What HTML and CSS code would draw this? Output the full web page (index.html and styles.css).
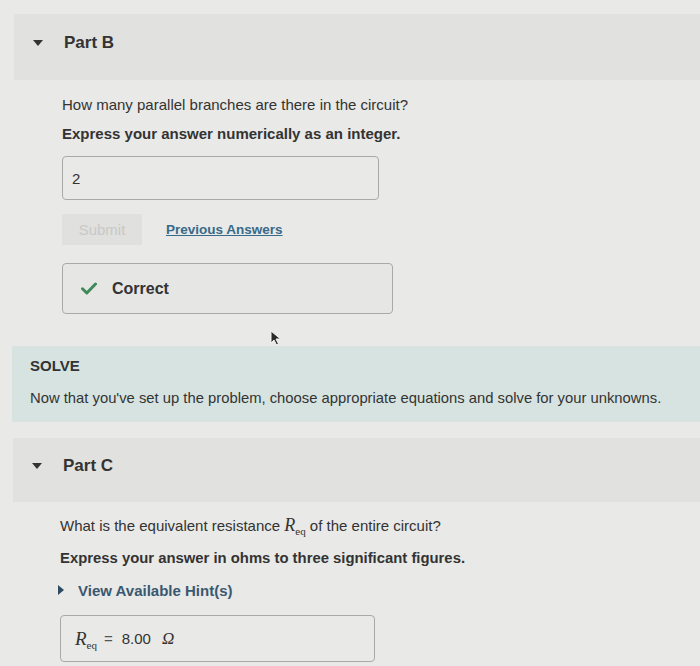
FILE: index.html
```html
<!DOCTYPE html>
<html>
<head>
<meta charset="utf-8">
<link rel="stylesheet" href="styles.css">
</head>
<body>
<div class="page">
  <div class="part-header hb">
    <span class="tri"></span>
    <span class="part-title">Part B</span>
  </div>
  <div class="part-body bb">
    <p class="q">How many parallel branches are there in the circuit?</p>
    <p class="instr">Express your answer numerically as an integer.</p>
    <div class="answer-box"><span class="ans">2</span></div>
    <div class="actions">
      <button class="submit">Submit</button>
      <a class="prev">Previous Answers</a>
    </div>
    <div class="correct-box">
      <svg class="check" width="16" height="13" viewBox="0 0 16 13"><path d="M1.5 6.8 L5.8 11 L14.5 2" fill="none" stroke="#3f8a5a" stroke-width="3" stroke-linecap="round" stroke-linejoin="round"/></svg>
      <span class="correct-text">Correct</span>
    </div>
  </div>
  <div class="cursor-row">
    <svg class="cursor" width="12" height="16" viewBox="0 0 12 16"><path d="M1 1 L1 13 L4 10 L6.5 15 L8.5 14 L6 9 L10.5 9 Z" fill="#2a2a2a" stroke="#f2f2f2" stroke-width="1"/></svg>
  </div>
  <div class="solve">
    <div class="solve-title">SOLVE</div>
    <div class="solve-text">Now that you've set up the problem, choose appropriate equations and solve for your unknowns.</div>
  </div>
  <div class="part-header hc">
    <span class="tri"></span>
    <span class="part-title">Part C</span>
  </div>
  <div class="part-body bc">
    <p class="q">What is the equivalent resistance <span class="math"><i>R</i><sub>eq</sub></span> of the entire circuit?</p>
    <p class="instr">Express your answer in ohms to three significant figures.</p>
    <div class="hint"><span class="hint-tri"></span><span class="hint-text">View Available Hint(s)</span></div>
    <div class="answer-box c">
      <span class="math big"><i>R</i><sub>eq</sub></span><span class="eq">=</span><span class="val">8.00</span><span class="omega">Ω</span>
    </div>
  </div>
</div>
</body>
</html>
```
FILE: styles.css
```css
html, body {
  margin: 0;
  padding: 0;
  background: #e9e9e7;
  font-family: "Liberation Sans", Arial, sans-serif;
  color: #333;
  overflow: hidden;
}
.page {
  padding-top: 14px;
  width: 700px;
}
.part-header {
  display: flex;
  align-items: center;
  background: #e1e1df;
  box-sizing: border-box;
  padding-bottom: 8px;
}
.hb {
  margin-left: 14px;
  padding-left: 19px;
  height: 66px;
}
.hc {
  margin-left: 13px;
  padding-left: 19px;
  height: 64px;
  margin-top: 16px;
}
.tri {
  width: 0;
  height: 0;
  border-left: 5.5px solid transparent;
  border-right: 5.5px solid transparent;
  border-top: 6px solid #333;
  margin-right: 21px;
}
.part-title {
  font-size: 17px;
  font-weight: bold;
  color: #333;
  line-height: 20px;
}
.part-body p {
  margin: 0;
  font-size: 15px;
  line-height: 20px;
}
.bb { padding-left: 62px; padding-top: 15px; }
.bc { padding-left: 60px; padding-top: 13px; }
.instr { font-weight: bold; }
.bb .instr { margin-top: 9px !important; }
.bc .instr { margin-top: 11px !important; font-size: 14.85px !important; }
.answer-box {
  box-sizing: border-box;
  width: 317px;
  height: 44px;
  border: 1px solid #a9a9a9;
  border-radius: 4px;
  margin-top: 12px;
  display: flex;
  align-items: center;
  padding-left: 9px;
  font-size: 15px;
}
.actions {
  display: flex;
  align-items: center;
  margin-top: 14px;
}
.submit {
  width: 80px;
  height: 31px;
  border: none;
  background: #e0e0de;
  color: #c8c8c6;
  font-family: "Liberation Sans", Arial, sans-serif;
  font-size: 15px;
  padding: 0;
}
.prev {
  margin-left: 24px;
  font-size: 13.5px;
  font-weight: bold;
  color: #386a8a;
  text-decoration: underline;
}
.correct-box {
  box-sizing: border-box;
  width: 331px;
  height: 51px;
  margin-top: 18px;
  border: 1px solid #a9a9a9;
  border-radius: 4px;
  display: flex;
  align-items: center;
  padding-left: 18px;
  background: #e6e6e4;
}
.check { margin-right: 15px; }
.correct-text { font-size: 16px; font-weight: bold; }
.cursor-row {
  height: 32px;
  position: relative;
}
.cursor { position: absolute; left: 270px; top: 16px; }
.solve {
  margin-left: 12px;
  background: #d6e3e0;
  height: 76px;
  box-sizing: border-box;
  padding: 10px 0 0 18px;
}
.solve-title { font-size: 15px; font-weight: bold; line-height: 20px; }
.solve-text { font-size: 14.8px; margin-top: 13px; line-height: 18px; }
.math { font-family: "Liberation Serif", "Times New Roman", serif; font-size: 18px; }
.math sub { font-size: 11px; position: relative; top: 4px; vertical-align: baseline; font-style: normal; }
.hint {
  display: flex;
  align-items: center;
  margin-top: 12px;
  height: 20px;
}
.hint-tri {
  width: 0; height: 0;
  border-top: 5px solid transparent;
  border-bottom: 5px solid transparent;
  border-left: 6px solid #2e4b62;
  margin-left: -2px;
  margin-right: 14px;
}
.hint-text { font-size: 15px; font-weight: bold; color: #3a5870; }
.answer-box.c {
  width: 315px;
  height: 47px;
  margin-top: 15px;
  padding-left: 14px;
}
.math.big { font-size: 19px; }
.eq { margin: 0 9px 0 7px; color: #555; font-size: 15px; }
.val { font-size: 15px; }
.omega { margin-left: 11px; font-family: "Liberation Serif", serif; font-style: italic; font-size: 17px; }
```
